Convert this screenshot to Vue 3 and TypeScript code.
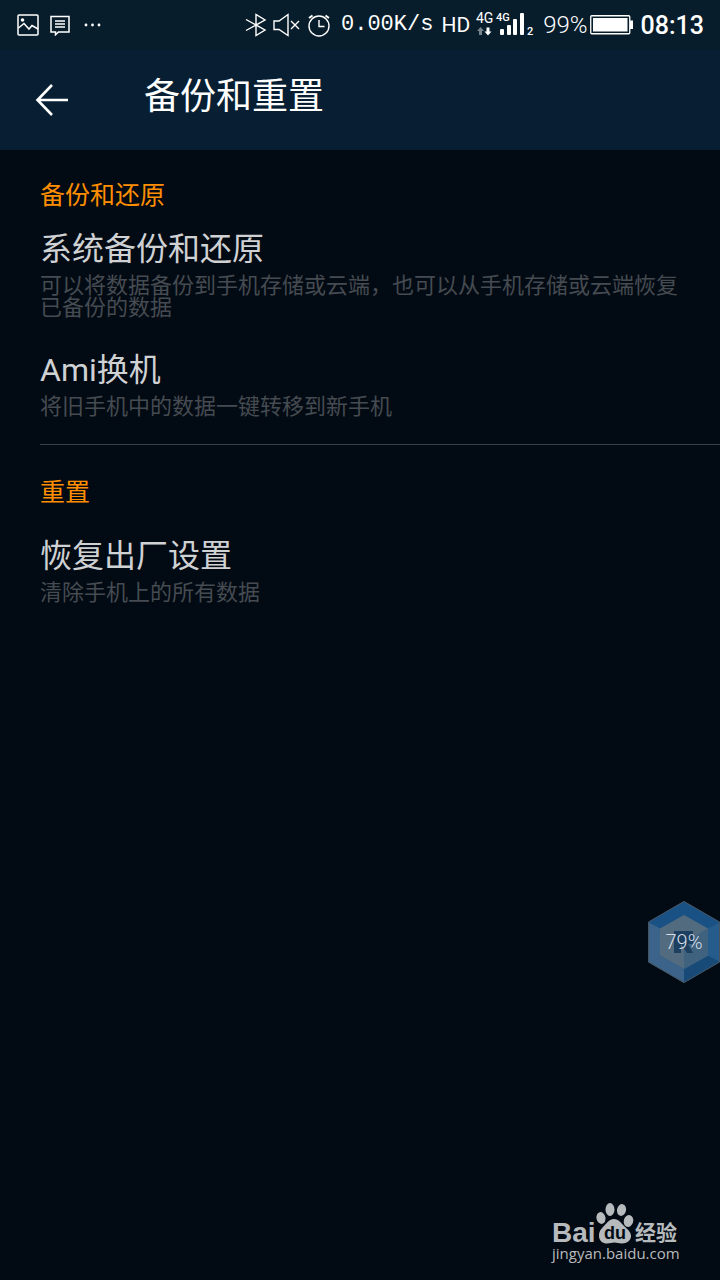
<script setup lang="ts">
interface Entry {
  title: string
  note: string
}
interface Group {
  id: string
  label: string
  entries: Entry[]
}

const groups: Group[] = [
  {
    id: 'backup',
    label: '备份和还原',
    entries: [
      {
        title: '系统备份和还原',
        note: '可以将数据备份到手机存储或云端，也可以从手机存储或云端恢复已备份的数据',
      },
      { title: 'Ami换机', note: '将旧手机中的数据一键转移到新手机' },
    ],
  },
  {
    id: 'reset',
    label: '重置',
    entries: [{ title: '恢复出厂设置', note: '清除手机上的所有数据' }],
  },
]
</script>

<template>
  <div class="screen">
    <div class="status">
      <div class="status-left">
        <svg width="22" height="22" viewBox="0 0 22 22" fill="none" stroke="#fff" stroke-width="1.5">
          <rect x="1" y="1" width="20" height="20" rx="1" />
          <circle cx="5.5" cy="6" r="1.8" fill="#fff" stroke="none" />
          <path d="M1.5 14 7 9.500l5 5.500 3-3.500 6 3.500" />
        </svg>
        <svg width="20" height="22" viewBox="0 0 20 22" fill="none" stroke="#fff" stroke-width="1.500">
          <path d="M1 2.500h18v15.500H8.500L5.500 20.800V18H1z" />
          <path d="M5 7h10M5 10h10M5 13h10" stroke-width="1.300" />
        </svg>
        <svg class="dots" width="18" height="22" viewBox="0 0 18 22" fill="#fff">
          <circle cx="3" cy="11" r="1.400" /><circle cx="9.500" cy="11" r="1.400" /><circle cx="16" cy="11" r="1.400" />
        </svg>
      </div>
      <div class="status-right">
        <svg width="22" height="24" viewBox="0 0 22 24" fill="none" stroke="#fff" stroke-width="1.400">
          <path d="M1 6.500 20 17l-9 5.500V1.500L20 7 1 17.500" />
        </svg>
        <svg class="speaker" width="27" height="24" viewBox="0 0 27 24" fill="none" stroke="#fff" stroke-width="1.400">
          <path d="M1 8h5l9-6.500v21L6 16.500H1zM18 8l8 8M26 8l-8 8" />
        </svg>
        <svg class="alarm" width="24" height="24" viewBox="0 0 24 24" fill="none" stroke="#fff" stroke-width="1.400">
          <circle cx="12" cy="13" r="10" />
          <path d="M12 7v6.500h5.500" />
          <path d="M2 5 5.500 2.500M22 5 18.500 2.500" stroke-width="2" />
        </svg>
        <span class="speed">0.00K/s</span>
        <span class="hd">HD</span>
        <svg class="signal" width="60" height="26" viewBox="0 0 60 26" fill="#fff">
          <text x="1" y="11" class="net-a">4G</text>
          <text x="21" y="9" class="net-b">4G</text>
          <path d="M5.500 15 9 19H7v4H4v-4H2z" opacity=".45" />
          <path d="M13 23.500 9.500 19.500h2v-4h3v4h2z" />
          <rect x="25" y="17" width="4" height="6" rx="1" />
          <rect x="32" y="13" width="4" height="10" rx="1" />
          <rect x="38" y="7" width="4" height="16" rx="1" />
          <rect x="45" y="1" width="4" height="22" rx="1" />
          <text x="52" y="23" class="sim">2</text>
        </svg>
        <span class="percent">99%</span>
        <svg class="battery" width="43" height="20" viewBox="0 0 43 20">
          <rect x=".75" y=".75" width="39" height="18" rx="1" fill="none" stroke="#fff" stroke-width="1.300" />
          <rect x="3" y="3" width="34.500" height="13.500" fill="#fff" />
          <rect x="40" y="5.500" width="3" height="8.500" fill="#fff" />
        </svg>
        <time class="clock">08:13</time>
      </div>
    </div>

    <header class="bar">
      <button class="back" type="button" aria-label="返回">
        <svg width="34" height="32" viewBox="0 0 34 32" fill="none" stroke="#fff" stroke-width="2.600">
          <path d="M17 1 2.500 16 17 31M2.500 16H33" />
        </svg>
      </button>
      <h1>备份和重置</h1>
    </header>

    <main>
      <section v-for="g in groups" :key="g.id" :class="['group', g.id]">
        <h2>{{ g.label }}</h2>
        <button v-for="e in g.entries" :key="e.title" class="entry" type="button">
          <span class="title">{{ e.title }}</span>
          <span class="note">{{ e.note }}</span>
        </button>
      </section>
    </main>

    <button class="float" type="button">
      <svg width="72" height="82" viewBox="0 0 72 82">
        <path d="M36 0 72 21v40L36 82 0 61V21z" fill="#1a5184" />
        <path d="M0 21 12 27.500v27L36 68v14L0 61z" fill="#3c6389" />
        <path d="M72 21 60 27.500v27L36 68v14L72 61z" fill="#184a78" />
        <path d="M72 21 60 27.500v27L72 61z" fill="#265c8c" />
        <path d="M36 14 60 27.500v27L36 68 12 54.500v-27z" fill="#536b7f" />
        <path d="M36 41 60 27.500v27L36 68z" fill="#3f627f" />
        <path d="M26 52V30h19v13h-5l5 9h-6l-6-9v9z" fill="#1d3f60" />
        <path d="M36 .5 71.500 21v40L36 81.500.5 61V21z" fill="none" stroke="#47545f" />
      </svg>
      <span>79%</span>
    </button>

    <svg class="mark" width="150" height="75" viewBox="0 0 150 75" fill="#b7babd">
      <text x="12" y="47" class="m-bai">Bai</text>
      <ellipse cx="61" cy="23" rx="4.500" ry="6" transform="rotate(-12 61 23)" />
      <ellipse cx="70" cy="14.500" rx="4.500" ry="6.500" />
      <ellipse cx="81.500" cy="15" rx="4.500" ry="6" transform="rotate(12 81.500 15)" />
      <ellipse cx="88.500" cy="26" rx="4.700" ry="6" transform="rotate(15 88.500 26)" />
      <path d="M74 24c-5 0-7 4-10 7s-5 5-5 10 4 7.500 8 7.500c3 0 5-1 7.500-1s4 1 7.500 1c5 0 9-3 9-7.500s-4-7-7-10-5-7-10-7z" />
      <text x="64" y="44" class="m-du">du</text>
      <text x="95" y="45" class="m-exp">经验</text>
      <text x="12" y="64" class="m-url">jingyan.baidu.com</text>
    </svg>
  </div>
</template>

<style>
body {
  background: #020a13;
}
</style>

<style scoped>
.screen {
  position: relative;
  min-height: 100vh;
  background: #020a13;
  color: #fff;
  font-family: Roboto, "Noto Sans CJK SC", sans-serif;
}
.screen * {
  box-sizing: border-box;
}
svg {
  display: block;
  flex: none;
}
.status {
  display: flex;
  align-items: center;
  justify-content: space-between;
  height: 50px;
  padding: 0 16px 0 17px;
  background: #081d2b;
}
.status-left,
.status-right {
  display: flex;
  align-items: center;
}
.status-left {
  gap: 11px;
}
.dots {
  margin-left: 2px;
}
.speaker {
  margin-left: 6px;
}
.alarm {
  margin-left: 7px;
}
.speed {
  margin-left: 10px;
  font: 22px/30px "Liberation Mono", monospace;
}
.hd {
  margin-left: 8px;
  font-size: 21px;
}
.signal {
  margin-left: 5px;
  overflow: visible;
}
.net-a {
  font: 14px Roboto, sans-serif;
}
.net-b {
  font: 500 11px Roboto, sans-serif;
}
.sim {
  font: 500 11px Roboto, sans-serif;
}
.percent {
  margin-left: 8px;
  font-size: 24px;
  font-weight: 300;
}
.battery {
  margin-left: 2px;
}
.clock {
  margin-left: 8px;
  font-size: 25px;
  font-weight: 500;
}
.bar {
  display: flex;
  align-items: center;
  height: 100px;
  padding-left: 26px;
  background: #081f33;
}
button {
  padding: 0;
  border: 0;
  background: none;
  color: inherit;
  font: inherit;
  text-align: left;
}
.back {
  display: grid;
  place-items: center;
  width: 52px;
  height: 52px;
}
h1 {
  margin: 0 0 6px 66px;
  font-size: 36px;
  font-weight: 400;
  line-height: 48px;
}
.group {
  padding: 31px 0 26px 40px;
}
.reset {
  position: relative;
  padding-top: 34px;
}
.reset::before {
  content: "";
  position: absolute;
  top: 0;
  left: 40px;
  right: 0;
  height: 1px;
  background: #3a4047;
}
h2 {
  margin: 0 0 18px;
  color: #ff8f00;
  font-size: 25px;
  font-weight: 400;
  line-height: 30px;
}
.reset h2 {
  margin-bottom: 28px;
}
.entry {
  display: block;
  width: 100%;
  padding-right: 40px;
}
.entry + .entry {
  margin-top: 31px;
}
.title,
.note {
  display: block;
}
.title {
  color: #cfd1d3;
  font-family: "Liberation Sans Narrow", Roboto, "Noto Sans CJK SC", sans-serif;
  font-size: 32px;
  line-height: 40px;
}
.note {
  margin-top: 6px;
  color: #454b51;
  font-size: 22px;
  line-height: 22px;
}
.float {
  position: absolute;
  top: 901px;
  right: 0;
  display: grid;
  place-items: center;
}
.float > * {
  grid-area: 1 / 1;
}
.float span {
  color: #d5dee6;
  font-size: 20px;
  font-weight: 300;
}
.mark {
  position: absolute;
  right: 30px;
  bottom: 10px;
}
.m-bai {
  font: bold 28px "Liberation Sans", sans-serif;
}
.m-du {
  fill: #020a13;
  font: bold 18px "Liberation Sans", sans-serif;
}
.m-exp {
  font: bold 21px "Noto Sans CJK SC", sans-serif;
}
.m-url {
  font: 15px "Open Sans", sans-serif;
}
</style>
